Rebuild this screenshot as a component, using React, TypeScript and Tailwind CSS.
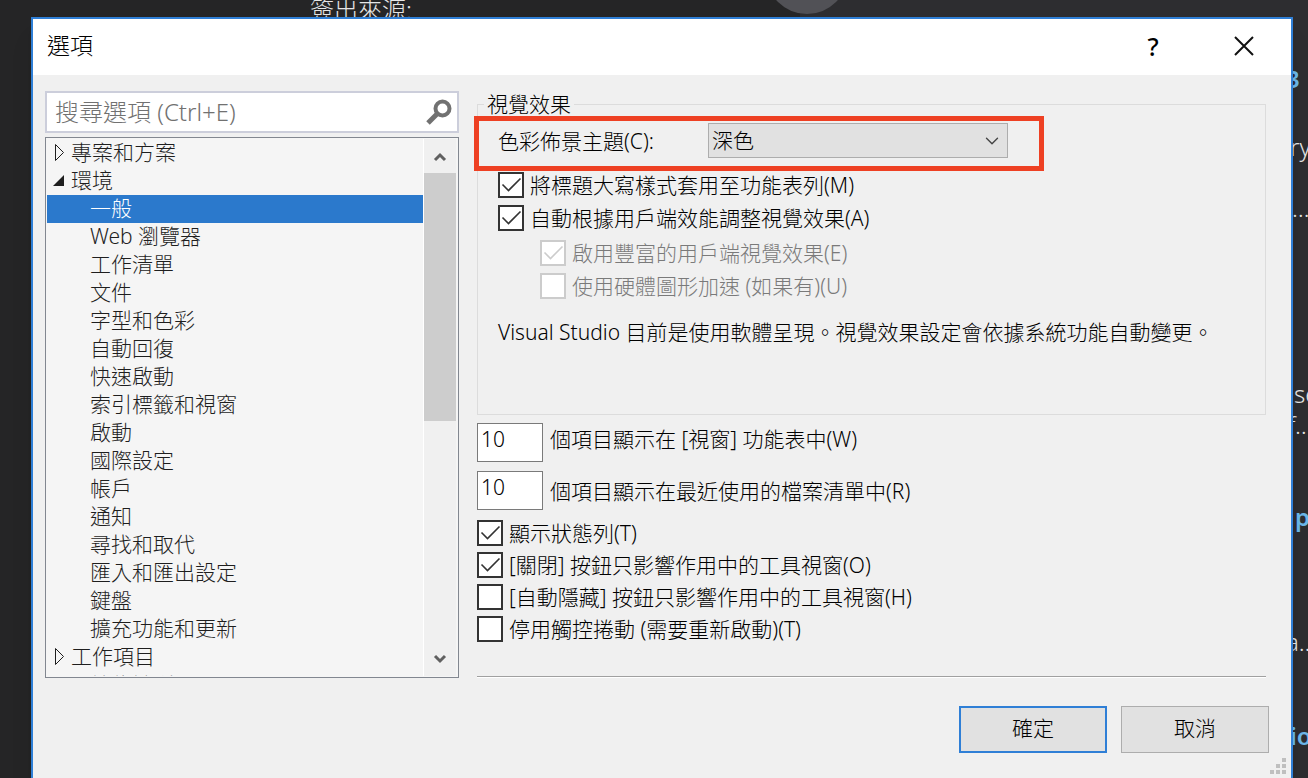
import { ChevronDown } from 'lucide-react'

const environmentPages = [
  '一般',
  'Web 瀏覽器',
  '工作清單',
  '文件',
  '字型和色彩',
  '自動回復',
  '快速啟動',
  '索引標籤和視窗',
  '啟動',
  '國際設定',
  '帳戶',
  '通知',
  '尋找和取代',
  '匯入和匯出設定',
  '鍵盤',
  '擴充功能和更新',
]

// Start page feed that peeks out to the right of the dialog
const feed = [
  { text: '3', className: 'mt-[65px] font-semibold text-[#6cb8ea]' },
  { text: 'ry', className: 'mt-[40px] pl-1' },
  { text: '…', className: 'mt-[33px] pl-[6px]' },
  { text: 'se', className: 'mt-[158px] pl-2' },
  { text: 'f…', className: 'mt-[3px] pl-[2px]' },
  { text: 'p', className: 'mt-[64px] pl-[9px] font-semibold text-[#6cb8ea]' },
  { text: 'a…', className: 'mt-[97px]' },
  { text: 'io', className: 'mt-[66px] pl-1 font-semibold text-[#6cb8ea]' },
]

function Backdrop() {
  return (
    <div className="absolute inset-0 flex overflow-hidden text-[24px] leading-7 text-[#e6e6e6]">
      <div className="w-[800px] shrink-0 bg-[#252526]">
        <p className="pl-[310px] leading-5">簽出來源:</p>
      </div>
      <div className="flex-1 bg-[#2d2d30]" />
      <div className="absolute -top-[68px] left-[766px] size-[82px] rounded-full bg-[#515156]" />
      <div className="absolute top-0 right-0 w-[22px] whitespace-nowrap">
        {feed.map((line) => (
          <p key={line.text} className={line.className}>{line.text}</p>
        ))}
      </div>
    </div>
  )
}

function TitleBar() {
  return (
    <header className="flex h-14 items-center bg-white pr-[35px] pb-[2px] pl-[14px]">
      <h1 className="flex-1 pb-[2px] text-[23px] leading-7">選項</h1>
      <button aria-label="說明" className="flex w-6 justify-center text-[25px] leading-7 font-medium">?</button>
      <button aria-label="關閉" className="ml-[67px]">
        <svg className="size-[24px]" viewBox="0 0 24 24" fill="none" stroke="#111" strokeWidth="2">
          <path d="M3 3L21 21M21 3L3 21" />
        </svg>
      </button>
    </header>
  )
}

function SearchBox() {
  return (
    <div className="flex h-[42px] items-center border-2 border-[#cccedb] bg-white pr-1">
      <input
        type="text"
        aria-label="搜尋選項"
        placeholder="搜尋選項 (Ctrl+E)"
        className="min-w-0 flex-1 bg-transparent pl-2 text-[24px] leading-8 outline-none placeholder:text-[#717171]"
      />
      <button aria-label="搜尋">
        <svg className="size-[28px]" viewBox="0 0 28 28" fill="none" stroke="#717171">
          <circle cx="17.5" cy="10.5" r="7" strokeWidth="4" />
          <path d="M13 15L3 25" strokeWidth="5" />
        </svg>
      </button>
    </div>
  )
}

function TreeParent({ label, open = false }: { label: string; open?: boolean }) {
  return (
    <button aria-expanded={open} className="flex h-7 w-full items-center gap-[7px] pb-[2px] pl-[5px] text-left">
      <svg className="h-[18px] w-[12px]" viewBox="0 0 12 18">
        {open ? (
          <path d="M12 4V15H1Z" fill="#1e1e1e" />
        ) : (
          <path d="M3.5 1.5V17.5L11.5 9.5Z" fill="none" stroke="#1e1e1e" />
        )}
      </svg>
      {label}
    </button>
  )
}

function ScrollBar() {
  return (
    <div className="flex w-8 shrink-0 flex-col bg-[#f0f0f0]">
      <button aria-label="向上捲動" className="flex h-[34px] items-center justify-center">
        <svg className="size-[14px]" viewBox="0 0 14 14" fill="none" stroke="#606060" strokeWidth="3">
          <path d="M2 11L7 6L12 11" />
        </svg>
      </button>
      <div className="h-[248px] bg-[#cdcdcd]" />
      <button aria-label="向下捲動" className="mt-auto flex h-[34px] items-center justify-center">
        <svg className="size-[14px]" viewBox="0 0 14 14" fill="none" stroke="#606060" strokeWidth="3">
          <path d="M2 4L7 9L12 4" />
        </svg>
      </button>
    </div>
  )
}

function OptionsTree() {
  return (
    <nav className="mt-1 flex h-[541px] border border-[#828790] bg-[#f5f5f5] py-px pr-[2px] pl-px text-[#1e1e1e]">
      <ul className="flex-1 overflow-hidden border-r border-white">
        <li><TreeParent label="專案和方案" /></li>
        <li>
          <TreeParent label="環境" open />
          <ul>
            {environmentPages.map((page, index) => (
              <li key={page}>
                <button
                  className={
                    index === 0
                      ? 'flex h-7 w-full items-center bg-[#2b79cc] pb-[2px] pl-[43px] text-left text-white'
                      : 'flex h-7 w-full items-center pb-[2px] pl-[43px] text-left'
                  }
                >
                  {page}
                </button>
              </li>
            ))}
          </ul>
        </li>
        <li><TreeParent label="工作項目" /></li>
        <li><button className="flex h-7 w-full items-center pl-[43px] text-left">效能診斷</button></li>
      </ul>
      <ScrollBar />
    </nav>
  )
}

type CheckOptionProps = { label: string; checked?: boolean; disabled?: boolean }

function CheckOption({ label, checked = false, disabled = false }: CheckOptionProps) {
  return (
    <label className={disabled ? 'flex h-[26px] items-center gap-[6px] text-[#7a7a7a]' : 'flex h-[26px] items-center gap-[6px]'}>
      <span className="grid size-[26px] shrink-0">
        <input
          type="checkbox"
          defaultChecked={checked}
          disabled={disabled}
          className="peer col-start-1 row-start-1 size-[26px] appearance-none border-2 border-[#333] bg-white disabled:border-[#ccc]"
        />
        <svg
          className="pointer-events-none invisible col-start-1 row-start-1 size-[26px] text-[#333] peer-checked:visible peer-disabled:text-[#ccc]"
          viewBox="0 0 26 26"
          fill="none"
          stroke="currentColor"
          strokeWidth="1.6"
        >
          <path d="M4.5 12.5L10.5 18.5L22.5 6.5" />
        </svg>
      </span>
      {label}
    </label>
  )
}

type CountOptionProps = { id: string; label: string; align: 'items-baseline' | 'items-center' }

function CountOption({ id, label, align }: CountOptionProps) {
  return (
    <div className={`flex h-[39px] gap-[7px] ${align}`}>
      <input id={id} type="text" defaultValue="10" className="h-[39px] w-[66px] border border-[#7a7a7a] bg-white pb-[7px] pl-[3px] outline-none" />
      <label htmlFor={id}>{label}</label>
    </div>
  )
}

function VisualExperience() {
  return (
    <fieldset className="relative -mt-px h-[325px] border border-[#dcdcdc] pl-5">
      <legend className="-ml-[14px] px-[3px] leading-7">視覺效果</legend>
      <div className="mt-[5px] flex items-center">
        <label htmlFor="theme" className="w-[210px]">色彩佈景主題(C):</label>
        <div className="grid w-[300px] items-center">
          <select id="theme" className="col-start-1 row-start-1 h-[35px] appearance-none border border-[#adadad] bg-[#e1e1e1] pb-[2px] pl-[3px]">
            <option>深色</option>
          </select>
          <ChevronDown className="pointer-events-none col-start-1 row-start-1 mr-[5px] size-[22px] justify-self-end text-[#444]" strokeWidth={1.5} />
        </div>
      </div>
      <div className="mt-[14px] flex flex-col gap-[7px]">
        <CheckOption label="將標題大寫樣式套用至功能表列(M)" checked />
        <CheckOption label="自動根據用戶端效能調整視覺效果(A)" checked />
      </div>
      <div className="mt-[9px] ml-[42px] flex flex-col gap-[7px]">
        <CheckOption label="啟用豐富的用戶端視覺效果(E)" checked disabled />
        <CheckOption label="使用硬體圖形加速 (如果有)(U)" disabled />
      </div>
      <p className="mt-[19px]">Visual Studio 目前是使用軟體呈現。視覺效果設定會依據系統功能自動變更。</p>
      {/* highlight around the theme picker */}
      <div className="pointer-events-none absolute -top-[2px] -left-[4px] h-[55px] w-[570px] border-5 border-[#ee4023]" />
    </fieldset>
  )
}

function ResizeGrip() {
  return (
    <svg className="absolute right-[5px] bottom-1 size-4" viewBox="0 0 16 16" fill="#bfbfbf">
      <path d="M12 0h4v4h-4zM6 6h4v4H6zM12 6h4v4h-4zM0 12h4v4H0zM6 12h4v4H6zM12 12h4v4h-4z" />
    </svg>
  )
}

export default function App() {
  return (
    <div className="relative min-h-screen bg-[#252526] pt-[17px] pr-[15px] pl-[31px] font-['Noto_Sans','Noto_Sans_CJK_TC',sans-serif] text-[21px] leading-7 font-light text-black">
      <Backdrop />
      <div role="dialog" aria-label="選項" className="relative min-h-[calc(100vh-17px)] border-2 border-b-0 border-[#2f7fd6] bg-[#f0f0f0] shadow-xl">
        <TitleBar />
        <div className="flex gap-[18px] pt-4 pr-[25px] pl-3">
          <aside className="w-[414px] shrink-0">
            <SearchBox />
            <OptionsTree />
          </aside>
          <main className="flex min-w-0 flex-1 flex-col">
            <VisualExperience />
            <div className="mt-2 flex flex-col gap-[9px]">
              <CountOption id="window-items" label="個項目顯示在 [視窗] 功能表中(W)" align="items-baseline" />
              <CountOption id="recent-items" label="個項目顯示在最近使用的檔案清單中(R)" align="items-center" />
            </div>
            <div className="mt-[10px] flex flex-col gap-[6px]">
              <CheckOption label="顯示狀態列(T)" checked />
              <CheckOption label="[關閉] 按鈕只影響作用中的工具視窗(O)" checked />
              <CheckOption label="[自動隱藏] 按鈕只影響作用中的工具視窗(H)" />
              <CheckOption label="停用觸控捲動 (需要重新啟動)(T)" />
            </div>
            <div className="mt-auto h-[2px] border-t border-[#a0a0a0] bg-white" />
          </main>
        </div>
        <footer className="mt-7 flex justify-end gap-[14px] pr-[22px]">
          <button className="h-[47px] w-[148px] border-2 border-[#2f7fd6] bg-[#e1e1e1] pb-[3px]">確定</button>
          <button className="h-[47px] w-[148px] border border-[#adadad] bg-[#e1e1e1] pb-[3px]">取消</button>
        </footer>
        <ResizeGrip />
      </div>
    </div>
  )
}
